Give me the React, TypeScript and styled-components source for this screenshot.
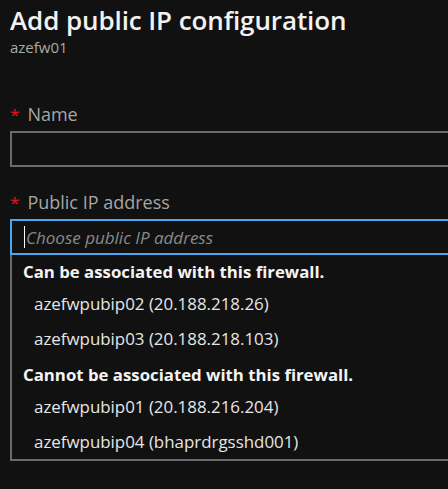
import styled, { createGlobalStyle } from 'styled-components'

const GlobalStyle = createGlobalStyle`
  html, body {
    margin: 0;
    padding: 0;
    background: #111111;
    overflow: hidden;
  }
  body {
    font-family: "Open Sans", "Noto Sans", sans-serif;
  }
`

const Blade = styled.div`
  width: 480px;
  padding: 2px 0 0 10px;
  box-sizing: border-box;
`

const Title = styled.h1`
  margin: 0;
  font-size: 26px;
  line-height: 36px;
  font-weight: 600;
  color: #f2f2f2;
  letter-spacing: -0.1px;
`

const Subtitle = styled.div`
  font-size: 15px;
  line-height: 18px;
  color: #a8a8a8;
`

const Field = styled.div<{ $top: number }>`
  margin-top: ${({ $top }) => $top}px;
`

const Label = styled.label`
  display: flex;
  align-items: baseline;
  gap: 8px;
  font-size: 18px;
  line-height: 24px;
  color: #a6a6a6;
  margin-bottom: 4px;
`

const Star = styled.span`
  color: #e81123;
  font-size: 17px;
`

const TextBox = styled.div<{ $focused?: boolean }>`
  height: 36px;
  border: 2px solid ${({ $focused }) => ($focused ? '#4aa7ef' : '#6b6b6b')};
  box-sizing: border-box;
  display: flex;
  align-items: center;
  padding-left: 12px;
`

const Caret = styled.span`
  width: 1px;
  height: 22px;
  background: #ffffff;
`

const Placeholder = styled.span`
  font-style: italic;
  font-size: 17px;
  color: #8a8a8a;
  margin-left: 1px;
`

const Dropdown = styled.div`
  border: 2px solid #6b6b6b;
  border-top: none;
  box-sizing: border-box;
  padding: 3px 0 0 11px;
`

const Group = styled.div`
  & + & {
    margin-top: 5px;
  }
`

const GroupHeading = styled.div`
  font-size: 16.8px;
  line-height: 28px;
  font-weight: 700;
  color: #f4f4f4;
`

const Option = styled.div`
  font-size: 16.9px;
  line-height: 35px;
  padding-left: 11px;
  color: #e6e6e6;
`

const groups = [
  {
    heading: 'Can be associated with this firewall.',
    items: ['azefwpubip02 (20.188.218.26)', 'azefwpubip03 (20.188.218.103)'],
  },
  {
    heading: 'Cannot be associated with this firewall.',
    items: ['azefwpubip01 (20.188.216.204)', 'azefwpubip04 (bhaprdrgsshd001)'],
  },
]

export default function App() {
  return (
    <>
      <GlobalStyle />
      <Blade>
        <Title>Add public IP configuration</Title>
        <Subtitle>azefw01</Subtitle>
        <Field $top={46}>
          <Label>
            <Star>*</Star>Name
          </Label>
          <TextBox />
        </Field>
        <Field $top={23}>
          <Label>
            <Star>*</Star>Public IP address
          </Label>
          <TextBox $focused>
            <Caret />
            <Placeholder>Choose public IP address</Placeholder>
          </TextBox>
          <Dropdown>
            {groups.map((g) => (
              <Group key={g.heading}>
                <GroupHeading>{g.heading}</GroupHeading>
                {g.items.map((item) => (
                  <Option key={item}>{item}</Option>
                ))}
              </Group>
            ))}
          </Dropdown>
        </Field>
      </Blade>
    </>
  )
}
